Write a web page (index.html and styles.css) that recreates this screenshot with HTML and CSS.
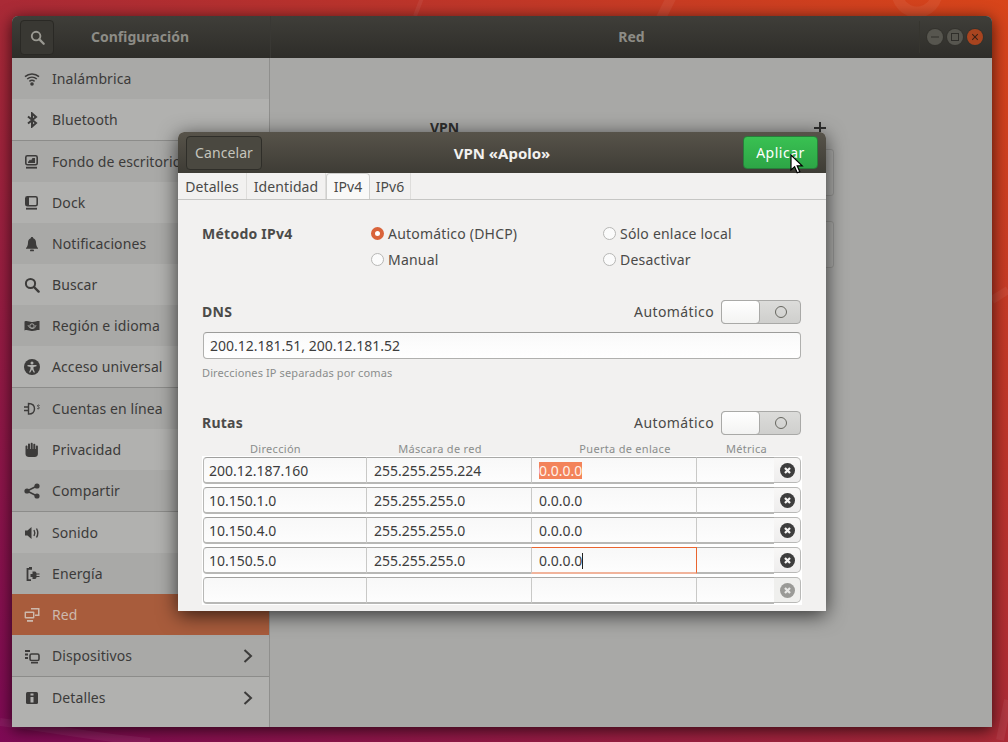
FILE: index.html
```html
<!DOCTYPE html>
<html lang="es">
<head>
<meta charset="utf-8">
<title>Configuración - Red</title>
<link rel="stylesheet" href="styles.css">
</head>
<body>
<div class="desktop">
  <svg class="wallpaper" width="1008" height="742" viewBox="0 0 1008 742"><g fill="none" stroke="#fff" stroke-opacity=".06"><circle cx="917" cy="-8" r="20" stroke-width="11"/><path d="M660 20L675-10" stroke-width="10"/><path d="M415 16L425-10" stroke-width="4"/><path d="M0 722c50 6 100 16 150 20" stroke-width="8"/><path d="M992 300l16-10M1000 740l8-40" stroke-width="8"/></g></svg>
  <section class="window">
    <header class="win-head">
      <div class="head-left">
        <button class="search-btn"><svg width="16" height="16" viewBox="0 0 16 16" class="ico"><circle cx="6.500" cy="6.500" r="4.600" fill="none" stroke="currentColor" stroke-width="2"/><path d="M10 10l4.600 4.600" stroke="currentColor" stroke-width="2.400" stroke-linecap="round"/></svg></button>
        <span class="head-title">Configuración</span>
      </div>
      <div class="head-right">
        <span></span>
        <span class="head-title">Red</span>
        <div class="win-controls">
          <span class="ctl"><svg width="10" height="10" viewBox="0 0 10 10"><path d="M0 5h10" stroke="#2e2d29" stroke-width="1.200"/></svg></span>
          <span class="ctl"><svg width="10" height="10" viewBox="0 0 10 10"><rect x="0.600" y="0.600" width="8.800" height="8.800" fill="none" stroke="#2e2d29" stroke-width="1.200"/></svg></span>
          <span class="ctl ctl-close"><svg width="10" height="10" viewBox="0 0 10 10"><path d="M1.500 1.500l7 7M8.500 1.500l-7 7" stroke="#3a2015" stroke-width="1.300"/></svg></span>
        </div>
      </div>
    </header>
    <div class="win-body">
      <nav class="sidebar">
        <div class="row"><svg class="ico" width="16" height="16" viewBox="0 0 16 16"><g fill="none" stroke="currentColor" stroke-width="1.500"><path d="M1 5.600c4-3.600 10-3.600 14 0"/><path d="M3.200 8c2.800-2.400 6.800-2.400 9.600 0"/><path d="M5.400 10.300c1.500-1.200 3.700-1.200 5.200 0"/></g><circle cx="8" cy="13" r="1.800" fill="currentColor"/></svg><span>Inalámbrica</span></div>
        <div class="row sep"><svg class="ico" width="16" height="16" viewBox="0 0 16 16"><path d="M4 4.500l8 6.500-4 3.600V1.400l4 3.600-8 6.500" fill="none" stroke="currentColor" stroke-width="2"/></svg><span>Bluetooth</span></div>
        <div class="row"><svg class="ico" width="16" height="16" viewBox="0 0 16 16"><rect x="1.800" y="1.800" width="11.400" height="9" rx="1.600" fill="none" stroke="currentColor" stroke-width="1.600"/><path d="M4 9h7V4H8.500L7 6.500 6 5.500 4 8z" fill="currentColor"/><rect x="2" y="12.800" width="11" height="1.800" fill="currentColor"/></svg><span>Fondo de escritorio</span></div>
        <div class="row"><svg class="ico" width="16" height="16" viewBox="0 0 16 16"><rect x="1.800" y="1.800" width="11.400" height="9" rx="1.600" fill="none" stroke="currentColor" stroke-width="1.600"/><rect x="2" y="2" width="3" height="8.500" fill="currentColor"/><rect x="2" y="12.800" width="11" height="1.800" fill="currentColor"/></svg><span>Dock</span></div>
        <div class="row"><svg class="ico" width="16" height="16" viewBox="0 0 16 16"><path d="M8 1c-.8 0-1.200.5-1.300 1.200C4.700 2.900 4 4.500 4 6.500c0 3-1 4.500-2 5.500v.8h12V12c-1-1-2-2.500-2-5.500 0-2-.7-3.600-2.700-4.300C9.200 1.500 8.800 1 8 1z" fill="currentColor"/><rect x="6" y="13.500" width="4" height="1.800" rx=".9" fill="currentColor"/></svg><span>Notificaciones</span></div>
        <div class="row"><svg class="ico" width="16" height="16" viewBox="0 0 16 16"><circle cx="6.500" cy="6.500" r="4.600" fill="none" stroke="currentColor" stroke-width="2"/><path d="M10 10l4.600 4.600" stroke="currentColor" stroke-width="2.400" stroke-linecap="round"/></svg><span>Buscar</span></div>
        <div class="row"><svg class="ico" width="16" height="16" viewBox="0 0 16 16"><path d="M.5 3.500c3-1.200 5 .8 8 .4 2.500-.3 5-1.200 7-.9v9c-2-.3-4.500.6-7 .9-3 .4-5-1.600-8-.4z" fill="currentColor"/><circle cx="8" cy="8" r="2.200" fill="none" stroke="#a9a9a7" stroke-width="1"/><path d="M4 7c.6 2 1.500 3 4 3.500s3.500-1.500 4-3.500" fill="none" stroke="#a9a9a7" stroke-width=".8"/></svg><span>Región e idioma</span></div>
        <div class="row sep"><svg class="ico" width="16" height="16" viewBox="0 0 16 16"><circle cx="8" cy="8" r="8" fill="currentColor"/><circle cx="8" cy="4" r="1.500" fill="#b1b1af"/><path d="M3.500 6h9v1.300L9.500 8v2l1.500 3.500h-1.300L8 10.500l-1.700 3H5l1.500-3.500V8l-3-.7z" fill="#b1b1af"/></svg><span>Acceso universal</span></div>
        <div class="row"><svg class="ico" width="16" height="16" viewBox="0 0 16 16"><g fill="none" stroke="currentColor" stroke-width="1.400"><path d="M0 6h4M0 9.500h4"/><path d="M4.500 2.500c4 0 6 2.300 6 5.300s-2 5.300-6 5.300z"/><path d="M15.500 4.500c-1-.8-2.200-.4-2 .5s2 1 1.800 2-1.400 1-2.200.4" stroke-width="1"/></g></svg><span>Cuentas en línea</span></div>
        <div class="row"><svg class="ico" width="16" height="16" viewBox="0 0 16 16"><path d="M1.500 4.500c0-1.300 2-1.300 2 0V7h.5V2.500c0-1.300 2-1.300 2 0V7h.7V1.800c0-1.300 2-1.300 2 0V7h.6V2.700c0-1.300 2-1.300 2 0V7h.6V4.500c0-1.300 2-1.300 2 0V12c0 2-1.500 3-3 3H5c-2 0-3.500-1-3.500-3z" fill="currentColor"/></svg><span>Privacidad</span></div>
        <div class="row sep"><svg class="ico" width="16" height="16" viewBox="0 0 16 16"><path d="M13 3L3 8l10 5" fill="none" stroke="currentColor" stroke-width="1.600"/><circle cx="13" cy="3" r="2.600" fill="currentColor"/><circle cx="3" cy="8" r="2.600" fill="currentColor"/><circle cx="13" cy="13" r="2.600" fill="currentColor"/></svg><span>Compartir</span></div>
        <div class="row"><svg class="ico" width="16" height="16" viewBox="0 0 16 16"><path d="M1 5.500h2.500L7.500 2v12l-4-3.500H1z" fill="currentColor"/><path d="M10 5c1 1.800 1 4.200 0 6M12.500 3.500c1.600 2.800 1.600 6.200 0 9" fill="none" stroke="currentColor" stroke-width="1.400"/></svg><span>Sonido</span></div>
        <div class="row"><svg class="ico" width="16" height="16" viewBox="0 0 16 16"><path d="M8 2.800H3.500v11.400H7" fill="none" stroke="currentColor" stroke-width="1.800"/><path d="M5 1h3v2H5z" fill="currentColor"/><path d="M8.500 5.500h2.500c.8 0 1.500 1 1.500 2h3v1h-3v1.500h3v1h-3c0 1-.7 2-1.500 2H8.500v-2H6.500v-3h2z" fill="currentColor"/></svg><span>Energía</span></div>
        <div class="row active"><svg class="ico" width="16" height="16" viewBox="0 0 16 16"><rect x=".6" y="4.600" width="9.800" height="7" rx="1" fill="currentColor"/><rect x="3" y="13" width="6" height="1.800" fill="currentColor"/><path d="M7 1h8.500v8H11V7.500h3V2.500H7z" fill="currentColor"/><path d="M2 6h7v4H2z" fill="#a85c3c"/></svg><span>Red</span></div>
        <div class="row sep"><svg class="ico" width="16" height="16" viewBox="0 0 16 16"><path d="M1 2h5v2H1zM1 5.500h3v2H1zM1 9h3v2H1z" fill="currentColor"/><rect x="6" y="6" width="9" height="6.500" rx="1.500" fill="none" stroke="currentColor" stroke-width="1.600"/><path d="M7 14h7v1.500H7z" fill="currentColor"/></svg><span>Dispositivos</span><svg class="chev" width="10" height="14" viewBox="0 0 10 14"><path d="M1.500 1L8 7l-6.500 6" fill="none" stroke="currentColor" stroke-width="2"/></svg></div>
        <div class="row"><svg class="ico" width="16" height="16" viewBox="0 0 16 16"><rect x="2" y="2" width="12" height="12" rx="1.500" fill="currentColor"/><path d="M6.500 3.500h3v2h-3zM6.500 7h3v5.500h-3z" fill="#b1b1af"/></svg><span>Detalles</span><svg class="chev" width="10" height="14" viewBox="0 0 10 14"><path d="M1.500 1L8 7l-6.500 6" fill="none" stroke="currentColor" stroke-width="2"/></svg></div>
      </nav>
      <main class="content">
        <div class="vpn-head"><b>VPN</b><span class="plus"></span></div>
        <div class="frame"></div>
        <div class="frame frame-b"></div>
      </main>
    </div>
  </section>

  <section class="dialog">
    <header class="dlg-head">
      <button class="btn-cancel">Cancelar</button>
      <span class="dlg-title">VPN «Apolo»</span>
      <button class="btn-apply">Aplicar</button>
    </header>
    <div class="tabs">
      <span class="tab tab-a">Detalles</span>
      <span class="tab tab-b">Identidad</span>
      <span class="tab tab-c on">IPv4</span>
      <span class="tab tab-d">IPv6</span>
    </div>
    <div class="form">
      <div class="method">
        <b>Método IPv4</b>
        <label class="radio"><i class="dot dot-on"></i>Automático (DHCP)</label>
        <label class="radio"><i class="dot"></i>Sólo enlace local</label>
        <span></span>
        <label class="radio"><i class="dot"></i>Manual</label>
        <label class="radio"><i class="dot"></i>Desactivar</label>
      </div>
      <div class="sec-head sec-dns">
        <b>DNS</b>
        <span class="auto">Automático</span>
        <span class="switch"><i class="thumb"></i><i class="ring"></i></span>
      </div>
      <div class="entry">200.12.181.51, 200.12.181.52</div>
      <p class="hint">Direcciones IP separadas por comas</p>
      <div class="sec-head sec-routes">
        <b>Rutas</b>
        <span class="auto">Automático</span>
        <span class="switch"><i class="thumb"></i><i class="ring"></i></span>
      </div>
      <div class="cols"><span>Dirección</span><span>Máscara de red</span><span>Puerta de enlace</span><span>Métrica</span></div>
      <div class="routes">
        <div class="route"><span class="cell">200.12.187.160</span><span class="cell">255.255.255.224</span><span class="cell"><mark>0.0.0.0</mark></span><span class="cell"></span><span class="clear"><svg width="15" height="15" viewBox="0 0 16 16"><circle cx="8" cy="8" r="8" fill="currentColor"/><path d="M5.300 5.300l5.400 5.400M10.700 5.300l-5.400 5.400" stroke="#f6f5f4" stroke-width="2.400"/></svg></span></div>
        <div class="route"><span class="cell">10.150.1.0</span><span class="cell">255.255.255.0</span><span class="cell">0.0.0.0</span><span class="cell"></span><span class="clear"><svg width="15" height="15" viewBox="0 0 16 16"><circle cx="8" cy="8" r="8" fill="currentColor"/><path d="M5.300 5.300l5.400 5.400M10.700 5.300l-5.400 5.400" stroke="#f6f5f4" stroke-width="2.400"/></svg></span></div>
        <div class="route"><span class="cell">10.150.4.0</span><span class="cell">255.255.255.0</span><span class="cell">0.0.0.0</span><span class="cell"></span><span class="clear"><svg width="15" height="15" viewBox="0 0 16 16"><circle cx="8" cy="8" r="8" fill="currentColor"/><path d="M5.300 5.300l5.400 5.400M10.700 5.300l-5.400 5.400" stroke="#f6f5f4" stroke-width="2.400"/></svg></span></div>
        <div class="route"><span class="cell">10.150.5.0</span><span class="cell">255.255.255.0</span><span class="cell focus">0.0.0.0<i class="caret"></i></span><span class="cell"></span><span class="clear"><svg width="15" height="15" viewBox="0 0 16 16"><circle cx="8" cy="8" r="8" fill="currentColor"/><path d="M5.300 5.300l5.400 5.400M10.700 5.300l-5.400 5.400" stroke="#f6f5f4" stroke-width="2.400"/></svg></span></div>
        <div class="route"><span class="cell"></span><span class="cell"></span><span class="cell"></span><span class="cell"></span><span class="clear off"><svg width="15" height="15" viewBox="0 0 16 16"><circle cx="8" cy="8" r="8" fill="currentColor"/><path d="M5.300 5.300l5.400 5.400M10.700 5.300l-5.400 5.400" stroke="#e8e8e6" stroke-width="2.400"/></svg></span></div>
      </div>
    </div>
  </section>

  <svg class="cursor" width="14" height="20" viewBox="0 0 14 20"><path d="M1 1v15l3.600-3.200 2.600 6 2.600-1.100-2.600-5.900h5z" fill="#fff" stroke="#000" stroke-width="1.200"/></svg>
</div>
</body>
</html>
```

FILE: styles.css
```css
* { box-sizing: border-box; }
html, body { margin: 0; padding: 0; }
body { font-family: "Noto Sans", "Open Sans", sans-serif; font-size: 14px; color: #3d3d3d; }
.desktop {
  position: relative; width: 1008px; height: 742px; overflow: hidden;
  background: linear-gradient(to bottom left, #d8451a 0%, #aa2a36 50%, #7e0a55 100%);
}
.wallpaper { position: absolute; left: 0; top: 0; }
.window {
  position: absolute; left: 12px; top: 16px; width: 980px; height: 711px;
  border-radius: 6px 6px 0 0; overflow: hidden;
  box-shadow: 0 3px 16px rgba(0,0,0,.7);
  display: flex; flex-direction: column; background: #a9a9a7;
}
.win-head {
  height: 42px; flex: none; display: flex;
  background: linear-gradient(#3f3e39, #2e2d29);
}
.head-left {
  width: 258px; flex: none; display: grid; grid-template-columns: 45px 1fr 55px; align-items: center;
  padding-left: 8px;
}
.head-title { font-weight: 700; font-size: 14px; color: #8d8c86; text-align: center; margin-top: -2px; }
.search-btn {
  width: 34px; height: 35px; padding: 0; background: #393833; border: 1px solid #2a2925; border-radius: 4px;
  color: #9a9992; display: flex; align-items: center; justify-content: center; font: inherit;
}
.search-btn svg { width: 15px; height: 15px; }
.head-right {
  flex: 1; display: grid; grid-template-columns: 1fr auto 1fr; align-items: center;
  border-left: 1px solid #393834;
}
.win-controls { justify-self: end; display: flex; gap: 4px; padding: 0 9px 0 7px; border-left: 1px solid #36352f; height: 32px; align-items: center; }
.ctl { width: 16px; height: 16px; border-radius: 50%; background: #57564f; display: flex; align-items: center; justify-content: center; box-shadow: 0 0 0 1px #33322d; }
.ctl svg { width: 8px; height: 8px; }
.ctl-close { background: #a8441f; }
.win-body { flex: 1; display: flex; min-height: 0; }
.sidebar { width: 258px; flex: none; background: #b1b1af; border-right: 1px solid #8f8f8d; }
.row {
  height: 41px; display: flex; align-items: center; gap: 12px; padding: 0 16px 0 12px;
  background: #b1b1af; color: #3c3b3a; font-size: 14px; white-space: nowrap; letter-spacing: .1px;
}
.row:nth-child(odd) { background: #a9a9a7; }
.row.sep { height: 42px; border-bottom: 1px solid #8c8c8a; }
.row.active { background: #a85c3c; color: #cdb9ad; }
.ico { flex: none; }
.chev { margin-left: auto; flex: none; }
.content { flex: 1; background: #a8a8a6; padding: 59px 158px 0 160px; }
.vpn-head { height: 21px; display: flex; align-items: center; justify-content: space-between; padding-right: 8px; font-size: 14px; color: #2f2f2e; }
.plus { width: 12px; height: 12px; background: linear-gradient(#2f2f2e,#2f2f2e) center/12px 2px no-repeat, linear-gradient(#2f2f2e,#2f2f2e) center/2px 12px no-repeat; }
.frame { height: 47px; margin-top: 11px; border: 1px solid #959593; border-radius: 3px; background: #ababa9; }
.frame-b { margin-top: 25px; }

.dialog {
  position: absolute; left: 178px; top: 132px; width: 648px; height: 479px;
  background: #f2f1f0; border-radius: 6px 6px 0 0; overflow: hidden;
  box-shadow: 0 4px 20px rgba(0,0,0,.7);
  display: flex; flex-direction: column;
}
.dlg-head {
  height: 41px; flex: none; display: grid; grid-template-columns: 1fr auto 1fr; align-items: center;
  padding: 0 8px; background: linear-gradient(#57534a, #3e3c35);
}
.dlg-title { font-weight: 700; font-size: 15px; color: #f2f1ef; }
.btn-cancel {
  justify-self: start; width: 76px; height: 34px; padding: 0; background: #4a4840; border: 1px solid #2f2e29; border-radius: 4px;
  color: #c5c4bc; font: inherit; font-size: 14px; letter-spacing: .1px;
}
.btn-apply {
  justify-self: end; width: 75px; height: 33px; padding: 0; background: linear-gradient(#39c152, #2da546); border: 1px solid #277e3a; border-radius: 4px;
  color: #fff; font: inherit; font-size: 14px; letter-spacing: .5px;
}
.tabs { height: 27px; flex: none; display: flex; border-bottom: 1px solid #c6c6c4; background: #f2f1f0; }
.tab { display: flex; align-items: center; justify-content: center; border-right: 1px solid #dedddb; color: #4a4a48; font-size: 14px; letter-spacing: .1px; }
.tab-a { width: 69px; }
.tab-b { width: 79px; }
.tab-c { width: 44px; }
.tab-d { width: 41px; }
.tab.on { background: #f9f9f8; border: 1px solid #cfcfcd; border-bottom: 0; border-radius: 4px 4px 0 0; }
.form { padding: 20px 25px 0 24px; }
b { font-weight: 700; }
.form b { font-size: 14px; color: #4b4b49; letter-spacing: .25px; }
.method { display: grid; grid-template-columns: 169px 232px 1fr; grid-auto-rows: 26px; align-items: center; }
.radio { display: flex; align-items: center; gap: 4px; color: #4a4a48; letter-spacing: .2px; }
.dot { width: 13px; height: 13px; border-radius: 50%; background: #fbfbfb; border: 1px solid #b7b7b5; flex: none; }
.dot-on { background: #fff; border: 4px solid #d9633a; }
.sec-head { display: flex; align-items: center; height: 24px; line-height: 24px; }
.sec-head b { margin-right: auto; align-self: flex-start; }
.sec-dns { margin-top: 28px; }
.sec-routes { margin-top: 32px; }
.auto { color: #4a4a48; margin-right: 7px; letter-spacing: .4px; }
.switch { width: 80px; height: 24px; background: linear-gradient(#dcdcda,#cfcfcd); border: 1px solid #a9a9a7; border-radius: 4px; display: flex; align-items: center; justify-content: space-between; padding-right: 13px; }
.thumb { width: 39px; height: 24px; margin: -1px 0 -1px -1px; background: linear-gradient(#fff, #f3f3f2); border: 1px solid #a9a9a7; border-radius: 4px; }
.ring { width: 12px; height: 12px; border: 1px solid #66665f; border-radius: 50%; }
.entry { margin: 8px 0 0 1px; height: 27px; line-height: 25px; padding-left: 6px; border: 1px solid #b0b0ae; border-top-color: #9c9c9a; border-radius: 4px; background: linear-gradient(#f9f9f9,#fff); color: #3d3d3d; }
.hint { margin: 6px 0 0; height: 14px; line-height: 15px; font-size: 11px; color: #8a8d8c; letter-spacing: .12px; }
.cols { margin-top: 7px; height: 14px; display: grid; grid-template-columns: 147px 182px 188px 55px; font-size: 11px; line-height: 14px; color: #8a8d8c; text-align: center; letter-spacing: .3px; white-space: nowrap; }
.routes { background: #fff; padding: 1px 0 1px 1px; width: 600px; display: flex; flex-direction: column; gap: 3px; height: 149px; }
.route { height: 27px; display: flex; flex: none; }
.cell { height: 27px; line-height: 25px; background: linear-gradient(#f8f8f8,#fdfdfd); border-top: 1px solid #a9a9a7; border-bottom: 2px solid #b8b8b6; border-left: 1px solid #c9c9c7; padding-left: 7px; width: 165px; color: #3d3d3d; position: relative; }
.cell:nth-child(1) { width: 163px; border: 1px solid #b8b8b6; border-bottom-width: 2px; border-right: 0; border-top-color: #a0a09e; border-radius: 4px 0 0 4px; padding-left: 5px; }
.cell:nth-child(4) { width: 78px; }
.cell.focus { border-top: 1px solid #e9652f; border-bottom: 2px solid #f1b49c; border-right: 1px solid #e9652f; margin-right: -1px; z-index: 1; width: 166px; }
mark { background: #f3835a; color: #fff2ea; padding: 0; display: inline-block; line-height: 17px; }
.caret { display: inline-block; width: 1px; height: 16px; background: #222; vertical-align: -3px; }
.clear { width: 27px; height: 26px; padding-left: 1px; display: flex; align-items: center; justify-content: center; color: #3d3d3d; background: linear-gradient(#f8f7f6,#eeeded); border: 1px solid #b9b9b7; border-left: 0; border-radius: 0 5px 5px 0; }
.clear.off { color: #9a9a97; background: #efefed; }
.cursor { position: absolute; left: 790px; top: 154px; }
```
